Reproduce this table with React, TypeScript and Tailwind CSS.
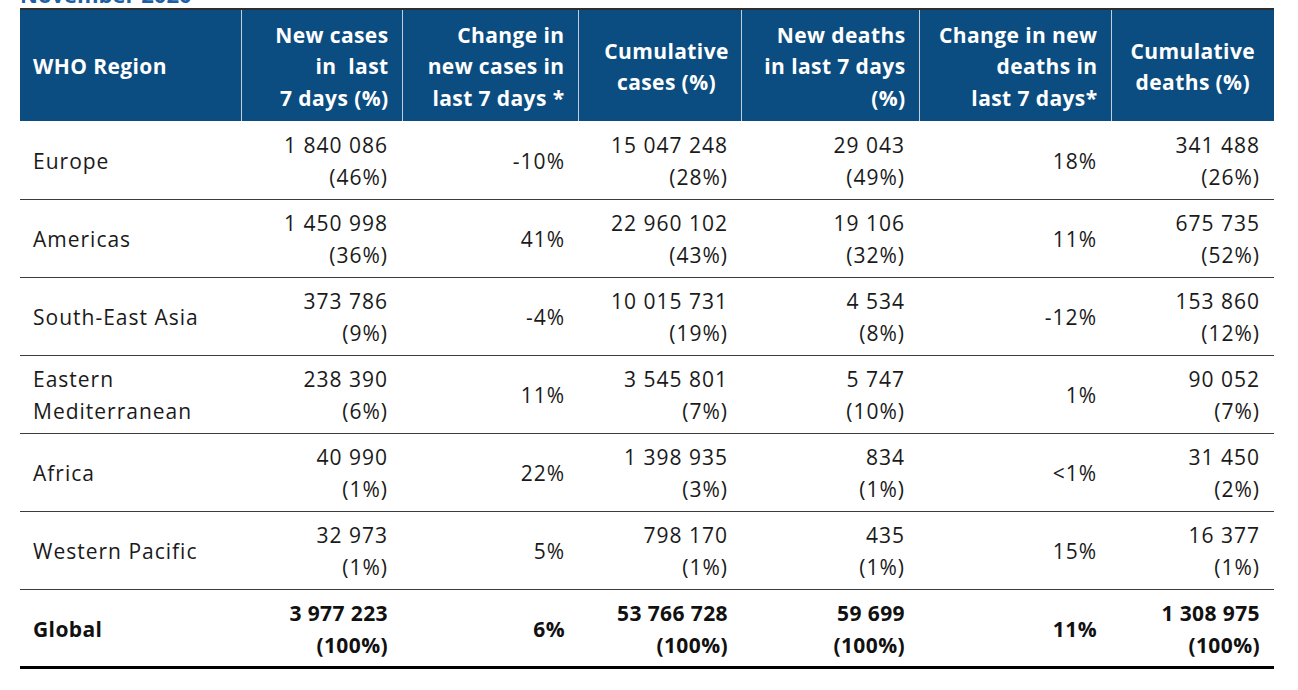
type Row = {
  region: string[];
  cases: [string, string];
  casesChange: string;
  cumCases: [string, string];
  deaths: [string, string];
  deathsChange: string;
  cumDeaths: [string, string];
  bold?: boolean;
};

const rows: Row[] = [
  { region: ['Europe'], cases: ['1 840 086', '(46%)'], casesChange: '-10%', cumCases: ['15 047 248', '(28%)'], deaths: ['29 043', '(49%)'], deathsChange: '18%', cumDeaths: ['341 488', '(26%)'] },
  { region: ['Americas'], cases: ['1 450 998', '(36%)'], casesChange: '41%', cumCases: ['22 960 102', '(43%)'], deaths: ['19 106', '(32%)'], deathsChange: '11%', cumDeaths: ['675 735', '(52%)'] },
  { region: ['South-East Asia'], cases: ['373 786', '(9%)'], casesChange: '-4%', cumCases: ['10 015 731', '(19%)'], deaths: ['4 534', '(8%)'], deathsChange: '-12%', cumDeaths: ['153 860', '(12%)'] },
  { region: ['Eastern', 'Mediterranean'], cases: ['238 390', '(6%)'], casesChange: '11%', cumCases: ['3 545 801', '(7%)'], deaths: ['5 747', '(10%)'], deathsChange: '1%', cumDeaths: ['90 052', '(7%)'] },
  { region: ['Africa'], cases: ['40 990', '(1%)'], casesChange: '22%', cumCases: ['1 398 935', '(3%)'], deaths: ['834', '(1%)'], deathsChange: '<1%', cumDeaths: ['31 450', '(2%)'] },
  { region: ['Western Pacific'], cases: ['32 973', '(1%)'], casesChange: '5%', cumCases: ['798 170', '(1%)'], deaths: ['435', '(1%)'], deathsChange: '15%', cumDeaths: ['16 377', '(1%)'] },
  { region: ['Global'], cases: ['3 977 223', '(100%)'], casesChange: '6%', cumCases: ['53 766 728', '(100%)'], deaths: ['59 699', '(100%)'], deathsChange: '11%', cumDeaths: ['1 308 975', '(100%)'], bold: true },
];

function Lines({ lines }: { lines: string[] }) {
  return (
    <>
      {lines.map((l, i) => (
        <div key={i}>{l}</div>
      ))}
    </>
  );
}

export default function App() {
  return (
    <div className="min-h-[690px] bg-white px-[20px] font-['Open_Sans',sans-serif] overflow-hidden">
      {/* title, mostly scrolled off the top */}
      <div className="-mt-[19px] mb-[1px] h-[26px] text-[22px] leading-[26px] font-bold text-[#1d5fa6]">
        November 2020
      </div>

      <table className="table-fixed border-collapse w-[1254px]">
        <colgroup>
          <col className="w-[221px]" />
          <col className="w-[161px]" />
          <col className="w-[176px]" />
          <col className="w-[163px]" />
          <col className="w-[178px]" />
          <col className="w-[192px]" />
          <col className="w-[163px]" />
        </colgroup>
        <thead>
          <tr className="bg-[#0b4d80] border-t-2 border-[#2e2e2e] text-white text-[21px] leading-[31.5px] font-bold tracking-[0.4px]">
            <th className="h-[112px] px-[13px] pt-[3px] text-left align-middle font-bold">WHO Region</th>
            <th className="px-[13px] pt-[3px] text-right align-middle font-bold border-l border-[#c3cfdb]">
              <Lines lines={['New cases', 'in\u00a0 last', '7 days (%)']} />
            </th>
            <th className="px-[13px] pt-[3px] text-right align-middle font-bold border-l border-[#c3cfdb]">
              <Lines lines={['Change in', 'new cases in', 'last 7 days *']} />
            </th>
            <th className="pl-[20px] pr-[6px] pt-[3px] text-center align-middle font-bold border-l border-[#c3cfdb]">
              <Lines lines={['Cumulative', 'cases (%)']} />
            </th>
            <th className="px-[13px] pt-[3px] text-right align-middle font-bold border-l border-[#c3cfdb]">
              <Lines lines={['New deaths', 'in last 7 days', '(%)']} />
            </th>
            <th className="px-[13px] pt-[3px] text-right align-middle font-bold border-l border-[#c3cfdb]">
              <Lines lines={['Change in new', 'deaths in', 'last 7 days*']} />
            </th>
            <th className="px-[13px] pt-[3px] text-center align-middle font-bold border-l border-[#c3cfdb]">
              <Lines lines={['Cumulative', 'deaths (%)']} />
            </th>
          </tr>
        </thead>
        <tbody>
          {rows.map((r) => (
            <tr
              key={r.region.join(' ')}
              className={
                r.bold
                  ? 'border-b-[3px] border-black text-[21px] leading-[32px] text-[#111] font-bold tracking-[0.4px]'
                  : 'border-b border-[#3c3c3c] text-[21px] leading-[32px] text-[#1a1a1a] tracking-[1px]'
              }
            >
              <td className="h-[78px] px-[13px] pt-[2px] text-left align-middle">
                <Lines lines={r.region} />
              </td>
              <td className="px-[14px] pt-[2px] text-right align-middle">
                <Lines lines={r.cases} />
              </td>
              <td className="px-[13px] pt-[2px] text-right align-middle">{r.casesChange}</td>
              <td className="px-[13px] pt-[2px] text-right align-middle">
                <Lines lines={r.cumCases} />
              </td>
              <td className="px-[14px] pt-[2px] text-right align-middle">
                <Lines lines={r.deaths} />
              </td>
              <td className="px-[14px] pt-[2px] text-right align-middle">{r.deathsChange}</td>
              <td className="px-[14px] pt-[2px] text-right align-middle">
                <Lines lines={r.cumDeaths} />
              </td>
            </tr>
          ))}
        </tbody>
      </table>
    </div>
  );
}
